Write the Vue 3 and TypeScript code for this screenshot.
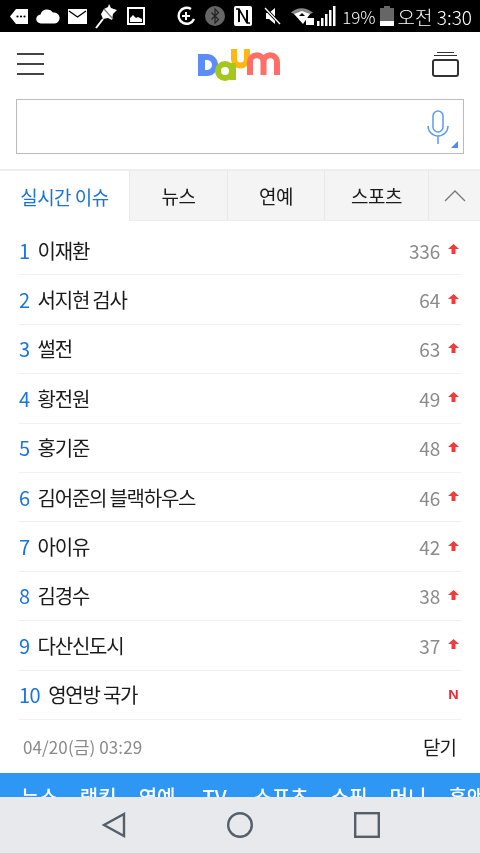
<script setup lang="ts">
interface Issue {
  rank: number;
  title: string;
  count?: number;
  isNew?: boolean;
}

const issues: Issue[] = [
  { rank: 1, title: '이재환', count: 336 },
  { rank: 2, title: '서지현 검사', count: 64 },
  { rank: 3, title: '썰전', count: 63 },
  { rank: 4, title: '황전원', count: 49 },
  { rank: 5, title: '홍기준', count: 48 },
  { rank: 6, title: '김어준의 블랙하우스', count: 46 },
  { rank: 7, title: '아이유', count: 42 },
  { rank: 8, title: '김경수', count: 38 },
  { rank: 9, title: '다산신도시', count: 37 },
  { rank: 10, title: '영연방 국가', isNew: true },
];

const tabs = ['뉴스', '연예', '스포츠'];
const gnb = ['뉴스', '랭킹', '연예', 'TV', '스포츠', '쇼핑', '머니', '홈앤'];
</script>

<template>
  <div class="screen">
    <div class="status">
      <div class="status-left">
        <svg width="18" height="15" viewBox="0 0 18 15"><path d="M6 0h12v15H6L0 7.500z" fill="#fff" /><g fill="#000"><circle cx="7.500" cy="7.500" r="1.100" /><circle cx="11" cy="7.500" r="1.100" /><circle cx="14.500" cy="7.500" r="1.100" /></g></svg>
        <svg width="24" height="16" viewBox="0 0 24 16"><path d="M5 15.500a4.500 4.500 0 0 1-.5-9A7 7 0 0 1 17 4.500a5.500 5.500 0 0 1 2 11z" fill="#fff" /></svg>
        <svg width="19" height="15" viewBox="0 0 19 15"><rect width="19" height="15" fill="#fff" /><path d="M1 2l8.500 6L18 2" fill="none" stroke="#000" stroke-width="1.400" /></svg>
        <svg class="pin" width="23" height="26" viewBox="0 0 23 26"><path d="M14 1l2 4 6 2-4 4-1 6-4-2-5 1-2-5 3-5 4-2z" fill="#fff" /><path d="M8 16L1 25" stroke="#fff" stroke-width="2" /><path d="M9 6l9 10" stroke="#777" stroke-width="1.200" /></svg>
        <svg width="18" height="18" viewBox="0 0 18 18"><rect x="1" y="1" width="16" height="16" fill="none" stroke="#fff" stroke-width="2" /><path d="M3 15v-4l3-3 3 3 2-1 4 2v3z" fill="#fff" /></svg>
      </div>
      <div class="status-right">
        <svg width="20" height="20" viewBox="0 0 20 20"><path d="M15 3A8 8 0 1 0 18 13" fill="none" stroke="#fff" stroke-width="2.400" /><path d="M10 6v8M6 10h8" stroke="#fff" stroke-width="2" /></svg>
        <svg width="20" height="20" viewBox="0 0 20 20"><circle cx="10" cy="10" r="10" fill="#666" /><path d="M6.500 6.500l7 7L10 17V3l3.500 3.500-7 7" fill="none" stroke="#222" stroke-width="1.200" /></svg>
        <svg width="18" height="20" viewBox="0 0 18 20"><rect width="18" height="20" rx="2" fill="#fff" /><path d="M2 3h3l8 14h3" fill="none" stroke="#000" stroke-width="1.600" /><path d="M5 3v13M13 4v13" stroke="#000" stroke-width="2" /></svg>
        <svg class="mute" width="18" height="18" viewBox="0 0 18 18"><path d="M2 6h3l6-5v16l-6-5H2z" fill="#fff" /><path d="M1 1l15 16" stroke="#000" stroke-width="3" /><path d="M1 1l15 16" stroke="#fff" stroke-width="1.300" /></svg>
        <svg class="wifi" width="24" height="20" viewBox="0 0 24 20"><path d="M0 6.500Q10-2 22 6.500L18 9Q10 4 5 9z" fill="#888" /><path d="M3 8l8-3 8 3-7 10z" fill="#fff" /><path d="M11 7l-3 3h6z" fill="#000" /><rect x="15" y="12" width="8" height="7" fill="#fff" /></svg>
        <svg width="20" height="20" viewBox="0 0 20 20"><g fill="#fff"><rect x="0" y="15" width="2.500" height="5" /><rect x="4" y="12" width="2.500" height="8" /><rect x="8" y="8" width="2.500" height="12" /><rect x="12" y="4" width="2.500" height="16" /><rect x="16" y="0" width="2.500" height="20" /></g></svg>
        <span class="pct">19%</span>
        <svg class="batt" width="14" height="20" viewBox="0 0 14 20"><path d="M4 0h6v2h4v18H0V2h4z" fill="#666" /><rect y="15" width="14" height="5" fill="#fff" /></svg>
        <span class="clock">오전 3:30</span>
      </div>
    </div>

    <header class="top">
      <div class="burger"><i></i><i></i><i></i></div>
      <svg class="logo" width="83" height="36" viewBox="0 0 83 36">
        <path d="M0 6h9a11 11 0 0 1 0 22H0z" fill="#5c8df6" />
        <path d="M7 12h2a4.500 4.500 0 0 1 0 10H7z" fill="#fff" />
        <path d="M49 1v10a6.500 6.500 0 0 1-13 0V1" fill="none" stroke="#fdb813" stroke-width="6" />
        <circle cx="27" cy="23" r="7" fill="#fff" stroke="#a5c61c" stroke-width="6" />
        <path d="M35 15v17" stroke="#a5c61c" stroke-width="6" />
        <path d="M52 27V14a6.750 6.750 0 0 1 13.500 0V27M65.500 14a6.750 6.750 0 0 1 13.500 0V27" fill="none" stroke="#ff6f68" stroke-width="6" />
      </svg>
      <div class="cards"><i></i><i></i><b></b></div>
    </header>

    <div class="search">
      <svg class="mic" width="22" height="34" viewBox="0 0 22 34">
        <rect x="6" y="1" width="10" height="21" rx="5" fill="none" stroke="#5b9bf0" stroke-width="1.500" />
        <path d="M1 16a10 10 0 0 0 20 0M11 26v8" fill="none" stroke="#5b9bf0" stroke-width="1.500" />
      </svg>
      <span class="corner"></span>
    </div>

    <nav class="tabs">
      <div class="tab active">실시간 이슈</div>
      <div v-for="t in tabs" :key="t" class="tab">{{ t }}</div>
      <div class="tab fold">
        <svg width="22" height="12" viewBox="0 0 22 12"><path d="M1 11L11 1l10 10" fill="none" stroke="#777" stroke-width="1.300" /></svg>
      </div>
    </nav>

    <ol class="list">
      <li v-for="item in issues" :key="item.rank" class="row">
        <span class="rank">{{ item.rank }}</span>
        <span class="title">{{ item.title }}</span>
        <span v-if="item.count" class="count">{{ item.count }}</span>
        <svg v-if="item.count" class="up" width="11" height="10" viewBox="0 0 11 10"><path d="M5.500 0L11 5H7.500v5h-4V5H0z" fill="#f03c3c" /></svg>
        <span v-if="item.isNew" class="new">N</span>
      </li>
    </ol>

    <div class="foot">
      <span class="time">04/20(금) 03:29</span>
      <span class="close">닫기</span>
    </div>

    <div class="gnb">
      <span v-for="g in gnb" :key="g">{{ g }}</span>
    </div>

    <div class="softkeys">
      <svg width="24" height="26" viewBox="0 0 24 26"><path d="M22 2v22L2 13z" fill="none" stroke="#555f69" stroke-width="2.400" /></svg>
      <svg width="26" height="26" viewBox="0 0 26 26"><circle cx="13" cy="13" r="11.800" fill="none" stroke="#555f69" stroke-width="2.400" /></svg>
      <svg width="26" height="26" viewBox="0 0 26 26"><rect x="1.200" y="1.200" width="23.600" height="23.600" fill="none" stroke="#555f69" stroke-width="2.400" /></svg>
    </div>
  </div>
</template>

<style>
html, body {
  margin: 0;
  background: #fff;
}
</style>

<style scoped>
.screen {
  width: 480px;
  height: 853px;
  display: flex;
  flex-direction: column;
  overflow: hidden;
  font-family: "Noto Sans CJK KR", "Noto Sans", sans-serif;
  color: #1a1a1a;
  will-change: transform;
}

.status {
  height: 32px;
  flex: none;
  background: #000;
  display: flex;
  align-items: center;
  justify-content: space-between;
  padding: 0 8px 0 10px;
  color: #fff;
}
.status-left, .status-right {
  display: flex;
  align-items: center;
}
.status-left { gap: 8px; }
.pin { margin-right: 1px; }
.status-right { gap: 9px; }
.mute { margin: 0 0 0 3px; }
.wifi { margin-right: -7px; }
.pct { font-size: 17px; font-weight: 300; margin-left: -4px; }
.batt { margin-left: -5px; }
.clock { font-size: 19px; font-weight: 300; margin-left: -5px; }

.top {
  height: 67px;
  box-sizing: border-box;
  padding: 0 21px 3px 17px;
  flex: none;
  display: flex;
  align-items: center;
  justify-content: space-between;
}
.burger {
  width: 27px;
  display: flex;
  flex-direction: column;
  gap: 8px;
}
.burger i {
  height: 2px;
  background: #444;
}
.logo { margin: 3px 0 0 3px; }
.cards {
  width: 27px;
  display: flex;
  flex-direction: column;
  align-items: center;
  gap: 2px;
}
.cards i {
  height: 1px;
  background: #333;
  width: 17px;
}
.cards i + i { width: 23px; }
.cards b {
  width: 23px;
  height: 14px;
  border: 2px solid #333;
  border-radius: 3px;
  margin-top: 1px;
}

.search {
  flex: none;
  position: relative;
  height: 53px;
  margin: 0 16px;
  border: 1.500px solid #bbb;
}
.mic {
  position: absolute;
  right: 14px;
  top: 10px;
}
.corner {
  position: absolute;
  right: 5px;
  bottom: 5px;
  width: 0;
  height: 0;
  border-left: 7px solid transparent;
  border-bottom: 7px solid #4a8cf0;
}

.tabs {
  flex: none;
  margin-top: 15px;
  height: 49px;
  display: flex;
  border-top: 2px solid #eee;
  border-bottom: 1px solid #eee;
  background: #f4f4f4;
}
.tab {
  width: 97px;
  display: flex;
  align-items: center;
  justify-content: center;
  font-size: 19px;
  letter-spacing: -0.5px;
  border-right: 1px solid #e8e8e8;
  box-sizing: border-box;
}
.tab:nth-child(2) { width: 98px; }
.tab:nth-child(4) { width: 104px; }
.tab.active {
  width: 130px;
  background: #fff;
  color: #1a74d8;
  margin-bottom: -1px;
}
.tab.fold {
  flex: 1;
  border-right: 0;
}

.list {
  list-style: none;
  margin: 5px 19px 0;
  padding: 0;
}
.row {
  height: 48.400px;
  border-bottom: 1px solid #f0f0f0;
  display: flex;
  align-items: center;
  font-size: 20px;
  letter-spacing: -1.250px;
}
.rank {
  color: #1a74e0;
  font-size: 20px;
  letter-spacing: -0.5px;
  margin-right: 8px;
}
.title {
  flex: 1;
  color: #1a1a1a;
}
.count {
  color: #8a8a8a;
  font-size: 19px;
  letter-spacing: -0.2px;
  margin-right: 8px;
}
.up {
  margin: -2px 2px 0 0;
}
.new {
  font-family: "Liberation Sans", sans-serif;
  font-size: 12px;
  font-weight: 700;
  letter-spacing: 0;
  color: #f0283c;
  margin-right: 3px;
  transform: scaleX(1.2);
}

.foot {
  height: 53px;
  flex: none;
  display: flex;
  align-items: center;
  justify-content: space-between;
  padding: 0 24px 0 23px;
}
.time {
  font-size: 17px;
  color: #8a8a8a;
  letter-spacing: 0.1px;
}
.close {
  font-size: 19px;
  letter-spacing: -1px;
}

.gnb {
  flex: none;
  height: 24px;
  background: #2e96f3;
  overflow: hidden;
  display: flex;
  gap: 22px;
  padding: 10px 0 0 21px;
  box-sizing: border-box;
  color: #fff;
  font-size: 20px;
  font-weight: 500;
  white-space: nowrap;
  line-height: 28px;
}
.gnb span:nth-child(4) { margin: 0 5px; }

.softkeys {
  flex: 1;
  background: #e8e9ed;
  display: flex;
  align-items: center;
  justify-content: space-between;
  padding: 0 100px 0 102px;
}
</style>
